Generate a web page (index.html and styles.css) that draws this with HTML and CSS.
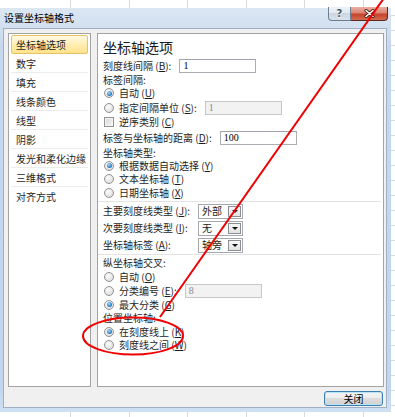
FILE: index.html
```html
<!DOCTYPE html>
<html>
<head>
<meta charset="utf-8">
<title>设置坐标轴格式</title>
<link rel="stylesheet" href="styles.css">
</head>
<body>

<div class="dialog">
  <div class="titlebar">
    <span class="caption">设置坐标轴格式</span>
    <div class="caption-buttons">
      <span class="btn-help">?</span>
      <span class="btn-close">
        <svg width="11" height="9" viewBox="0 0 11 9">
          <path d="M2 1.5 L9 7.5 M9 1.5 L2 7.5" stroke="#4a1d16" stroke-width="3.2" stroke-linecap="round" fill="none"/>
          <path d="M2 1.5 L9 7.5 M9 1.5 L2 7.5" stroke="#fff" stroke-width="1.6" stroke-linecap="round" fill="none"/>
        </svg>
      </span>
    </div>
  </div>

  <div class="client">
    <div class="panes">
      <ul class="nav">
        <li class="sel">坐标轴选项</li>
        <li>数字</li>
        <li>填充</li>
        <li>线条颜色</li>
        <li>线型</li>
        <li>阴影</li>
        <li>发光和柔化边缘</li>
        <li>三维格式</li>
        <li>对齐方式</li>
      </ul>

      <div class="page">
        <div class="page-title">坐标轴选项</div>

        <div class="row h14"><span class="lbl">刻度线间隔 (<u>B</u>):</span><span class="edit">1</span></div>
        <div class="row h13"><span class="lbl">标签间隔:</span></div>
        <div class="row h14"><span class="radio on"></span><span class="lbl">自动 (<u>U</u>)</span></div>
        <div class="row h15"><span class="radio"></span><span class="lbl">指定间隔单位 (<u>S</u>):</span><span class="edit off">1</span></div>
        <div class="row h14"><span class="check"></span><span class="lbl">逆序类别 (<u>C</u>)</span></div>
        <div class="row h17"><span class="lbl">标签与坐标轴的距离 (<u>D</u>):</span><span class="edit">100</span></div>
        <div class="row h13"><span class="lbl">坐标轴类型:</span></div>
        <div class="row h13"><span class="radio on"></span><span class="lbl">根据数据自动选择 (<u>Y</u>)</span></div>
        <div class="row h14"><span class="radio"></span><span class="lbl">文本坐标轴 (<u>T</u>)</span></div>
        <div class="row h14"><span class="radio"></span><span class="lbl">日期坐标轴 (<u>X</u>)</span></div>

        <div class="sep"></div>

        <div class="row combo-row"><span class="lbl col">主要刻度线类型 (<u>J</u>):</span><span class="combo">外部<span class="drop"></span></span></div>
        <div class="row combo-row"><span class="lbl col">次要刻度线类型 (<u>I</u>):</span><span class="combo">无<span class="drop"></span></span></div>
        <div class="row combo-row"><span class="lbl col">坐标轴标签 (<u>A</u>):</span><span class="combo">轴旁<span class="drop"></span></span></div>

        <div class="sep"></div>

        <div class="row h14"><span class="lbl">纵坐标轴交叉:</span></div>
        <div class="row h13"><span class="radio"></span><span class="lbl">自动 (<u>O</u>)</span></div>
        <div class="row h15"><span class="radio"></span><span class="lbl">分类编号 (<u>E</u>):</span><span class="edit off">8</span></div>
        <div class="row h13"><span class="radio on"></span><span class="lbl">最大分类 (<u>G</u>)</span></div>
        <div class="row h14"><span class="lbl">位置坐标轴:</span></div>
        <div class="row h13"><span class="radio on"></span><span class="lbl">在刻度线上 (<u>K</u>)</span></div>
        <div class="row h14"><span class="radio"></span><span class="lbl">刻度线之间 (<u>W</u>)</span></div>
      </div>
    </div>

    <div class="footer">
      <span class="button default">关闭</span>
    </div>
  </div>
</div>

<!-- red pen marks drawn over the screenshot -->
<svg class="marks" width="395" height="417" viewBox="0 0 395 417">
  <line x1="384" y1="-2" x2="160" y2="317" stroke="#f00000" stroke-width="2"/>
  <ellipse cx="133" cy="336" rx="50" ry="18.5" stroke="#f00000" stroke-width="2" fill="none"/>
</svg>

</body>
</html>
```

FILE: styles.css
```css
BODY {
    margin : 0;
    width : 395px;
    height : 417px;
    overflow : hidden;
    position : relative;
    font-family : "Noto Sans CJK SC", "Liberation Sans", sans-serif;
    font-size : 10px;
    color : #1e1e1e;
    background-color : #fff;
    background-image :
        repeating-linear-gradient(90deg, transparent 0, transparent 57.5px, #d9dadc 57.5px, #d9dadc 58.5px),
        repeating-linear-gradient(180deg, transparent 0, transparent 14px, #d9dadc 14px, #d9dadc 15px);
    background-position : 13px 0, 0 1px;
}
U {
    text-decoration : underline;
}

/* window frame */
.dialog {
    margin-top : 8px;
    width : 391px;
    height : 404px;
    box-sizing : border-box;
    padding : 0 4px 4px 3px;
    background : linear-gradient(#dce7f3, #c6d8ed 40px, #c2d5eb 380px, #cfe0f3);
    display : flex;
    flex-direction : column;
}
.titlebar {
    height : 20px;
    display : flex;
    justify-content : space-between;
    align-items : flex-start;
}
.caption {
    margin-top : 4px;
    padding-left : 1px;
    line-height : 12px;
    color : #000;
}
.caption-buttons {
    display : flex;
    margin-top : -1px;
    margin-right : -1px;
}
.btn-help, .btn-close {
    height : 14px;
    box-sizing : border-box;
    display : flex;
    align-items : center;
    justify-content : center;
}
.btn-help {
    width : 23px;
    border : 1px solid #6d7c8e;
    border-top : none;
    border-radius : 0 0 0 4px;
    background : linear-gradient(#eef3f9, #dfe7f0 50%, #cbd6e3 50%, #d8e2ed);
    font-family : "DejaVu Sans", sans-serif;
    font-weight : bold;
    font-size : 10px;
    color : #4d5763;
    text-shadow : 0 1px 0 #fff;
}
.btn-close {
    width : 37px;
    border : 1px solid #5b2a24;
    border-left : none;
    border-top : none;
    border-radius : 0 0 4px 0;
    background : linear-gradient(#eab1a3, #dc8571 45%, #c5432e 55%, #d46a4c);
}

/* client area */
.client {
    flex : 1;
    background : #f0f0f0;
    border : 1px solid #9fb0c4;
    padding : 4px 2px 0 4px;
    display : flex;
    flex-direction : column;
}
.panes {
    display : flex;
    gap : 6px;
    height : 354px;
}

.nav {
    list-style : none;
    margin : 0;
    width : 83px;
    box-sizing : border-box;
    border : 1px solid #a3a3a3;
    background : #fff;
    padding : 1px 2px;
}
.nav LI {
    height : 19px;
    line-height : 19px;
    box-sizing : border-box;
    padding-left : 5px;
    border-bottom : 1px solid #ececec;
    white-space : nowrap;
}
.nav LI:last-child {
    border-bottom : none;
}
.nav LI.sel {
    border : 1px solid #e5c365;
    border-radius : 2px;
    padding-left : 4px;
    line-height : 17px;
    background : linear-gradient(#fff9e3, #ffeeb3 50%, #ffe38a);
}

.page {
    width : 287px;
    box-sizing : border-box;
    border : 1px solid #a3a3a3;
    background : #fff;
    padding : 2px 5px;
}
.page-title {
    height : 23px;
    line-height : 22px;
    font-size : 14px;
    color : #1a1a1a;
}

.row {
    display : flex;
    align-items : center;
    white-space : nowrap;
}
.h13 { height : 13px; }
.h14 { height : 14px; }
.h15 { height : 15px; }
.h17 { height : 17px; }

.lbl {
    display : inline-block;
    height : 12px;
    line-height : 12px;
}
.lbl.col {
    width : 95px;
}

.radio, .check {
    width : 10px;
    height : 10px;
    box-sizing : border-box;
    margin : 0 5px 0 1px;
    flex : none;
    position : relative;
    border : 1px solid #939393;
}
.radio {
    border-radius : 50%;
    background : radial-gradient(circle at 40% 35%, #fcfcfc, #d6d6d6);
}
.radio.on::after {
    content : "";
    position : absolute;
    left : 1.5px;
    top : 1.5px;
    width : 5px;
    height : 5px;
    border-radius : 50%;
    background : radial-gradient(circle at 40% 35%, #9fdcfb, #2575bd 70%, #1c5a96);
}
.check {
    background : linear-gradient(135deg, #d8d8d8, #f6f6f6);
    box-shadow : inset 0 0 0 1px #f4f4f4;
}

.edit {
    width : 77px;
    height : 14px;
    box-sizing : border-box;
    margin-left : 8px;
    border : 1px solid #abadb3;
    border-top-color : #a0a3a9;
    background : #fff;
    padding-left : 3px;
    line-height : 12px;
    font-family : "Liberation Serif", serif;
    font-size : 10px;
    color : #000;
}
.edit.off {
    background : #f2f2f2;
    border-color : #c5c7cb;
    color : #8d8d8d;
}

.combo-row {
    height : 16px;
    margin-top : 1px;
}
.combo {
    width : 45px;
    height : 15px;
    box-sizing : border-box;
    border : 1px solid #a5a8ae;
    background : #fff;
    display : flex;
    align-items : center;
    justify-content : space-between;
    padding-left : 3px;
    line-height : 12px;
}
.drop {
    width : 13px;
    height : 11px;
    box-sizing : border-box;
    margin-right : 1px;
    border : 1px solid #8a8d92;
    background : linear-gradient(#f6f6f6, #e2e2e2);
    display : flex;
    align-items : center;
    justify-content : center;
}
.drop::after {
    content : "";
    border-left : 3px solid transparent;
    border-right : 3px solid transparent;
    border-top : 3px solid #111;
}

.sep {
    height : 0;
    border-top : 1px solid #e3e3e3;
    margin : 1px -3px 1px -5px;
}

.footer {
    display : flex;
    justify-content : flex-end;
    margin-top : 4px;
    padding-right : 1px;
}
.button {
    width : 59px;
    height : 15px;
    box-sizing : border-box;
    border : 1px solid #707070;
    border-radius : 3px;
    background : linear-gradient(#f4f4f4, #ececec 50%, #dddddd 50%, #d0d0d0);
    text-align : center;
    line-height : 13px;
    color : #000;
}
.button.default {
    border-color : #3c7fb1;
    box-shadow : inset 0 0 0 1px #b6e4fb;
}

.marks {
    position : absolute;
    left : 0;
    top : 0;
    pointer-events : none;
}
```
